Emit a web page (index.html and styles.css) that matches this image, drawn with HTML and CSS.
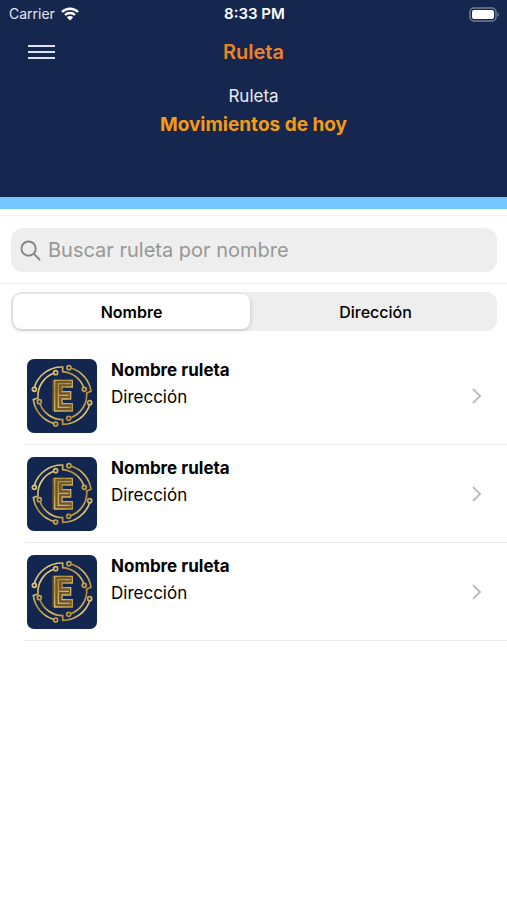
FILE: index.html
```html
<!DOCTYPE html>
<html lang="es">
<head>
<meta charset="utf-8">
<meta name="viewport" content="width=device-width, initial-scale=1">
<title>Ruleta</title>
<link rel="stylesheet" href="styles.css">
</head>
<body>
<svg class="defs" aria-hidden="true">
  <defs>
    <linearGradient id="gold" gradientUnits="userSpaceOnUse" x1="10" y1="30" x2="200" y2="190">
      <stop offset="0" stop-color="#9a7430"/>
      <stop offset=".2" stop-color="#e8cf7c"/>
      <stop offset=".4" stop-color="#b08a35"/>
      <stop offset=".55" stop-color="#d9b963"/>
      <stop offset=".75" stop-color="#b58d38"/>
      <stop offset=".88" stop-color="#efd984"/>
      <stop offset="1" stop-color="#a67d2c"/>
    </linearGradient>
    <symbol id="logo" viewBox="0 0 210 222">
      <g fill="none" stroke="url(#gold)" stroke-width="5">
        <path d="M22 85A86 86 0 0 1 107 24V38A73 73 0 0 1 170 85"/>
        <path d="M132 27A86 86 0 0 1 192 97L179 102A73 73 0 0 1 131 176"/>
        <path d="M188 137A86 86 0 0 1 107 196V182A73 73 0 0 1 39 134"/>
        <path d="M80 193A86 86 0 0 1 19 122L33 117A73 73 0 0 1 80 43"/>
        <circle cx="126" cy="26" r="6"/>
        <circle cx="86" cy="41" r="6"/>
        <circle cx="22" cy="91" r="6"/>
        <circle cx="37" cy="128" r="6"/>
        <circle cx="86" cy="195" r="6"/>
        <circle cx="125" cy="178" r="6"/>
        <circle cx="188" cy="131" r="6"/>
        <circle cx="172" cy="91" r="6"/>
      </g>
      <path d="M76 62H136V84H102V98H131V120H102V134H136V157H76Z" fill="#6d5630"/>
      <g fill="none" stroke="url(#gold)" stroke-width="4">
        <path d="M83 64H136V84H105V98H131V120H105V134H136V156H83Z"/>
        <path d="M130 74H94V109H125M94 109V145H130"/>
      </g>
    </symbol>
  </defs>
</svg>

<header class="header">
  <div class="status">
    <div class="carrier">Carrier
      <svg class="wifi" viewBox="0 0 18 14" aria-hidden="true">
        <path d="M1 5a11.500 11.500 0 0 1 16 0M4 8a7.200 7.200 0 0 1 10 0" fill="none" stroke="#fff" stroke-width="2.400"/>
        <path d="M5.800 10.300a4.600 4.600 0 0 1 6.400 0L9 13.600Z" fill="#fff"/>
      </svg>
    </div>
    <time>8:33 PM</time>
    <svg class="battery" viewBox="0 0 31 15" aria-hidden="true">
      <rect x="1" y="1" width="26" height="13" rx="4" fill="none" stroke="#737b97" stroke-width="1.500"/>
      <rect x="3" y="3" width="22" height="9" rx="2" fill="#fff"/>
      <path d="M28.500 5q3 2.500 0 5Z" fill="#737b97"/>
    </svg>
  </div>
  <nav class="navbar">
    <button class="menu" type="button" aria-label="Menú"><span></span><span></span><span></span></button>
    <h1>Ruleta</h1>
  </nav>
  <p class="subtitle">Ruleta</p>
  <h2>Movimientos de hoy</h2>
</header>

<main>
  <form class="search" role="search">
    <label class="field">
      <svg viewBox="0 0 22 22" aria-hidden="true"><circle cx="9" cy="9" r="7.500"/><path d="M14.500 14.500 21 21"/></svg>
      <input type="search" placeholder="Buscar ruleta por nombre" aria-label="Buscar ruleta por nombre">
    </label>
  </form>
  <div class="segments">
    <button class="segment selected" type="button" aria-pressed="true">Nombre</button>
    <button class="segment" type="button" aria-pressed="false">Dirección</button>
  </div>
  <ul class="list">
    <li><a class="row" href="#">
      <svg class="logo" aria-hidden="true"><use href="#logo"/></svg>
      <span class="text"><strong>Nombre ruleta</strong><span>Dirección</span></span>
      <svg class="chevron" viewBox="0 0 10 16" aria-hidden="true"><path d="m1 1 7 7-7 7"/></svg>
    </a></li>
    <li><a class="row" href="#">
      <svg class="logo" aria-hidden="true"><use href="#logo"/></svg>
      <span class="text"><strong>Nombre ruleta</strong><span>Dirección</span></span>
      <svg class="chevron" viewBox="0 0 10 16" aria-hidden="true"><path d="m1 1 7 7-7 7"/></svg>
    </a></li>
    <li><a class="row" href="#">
      <svg class="logo" aria-hidden="true"><use href="#logo"/></svg>
      <span class="text"><strong>Nombre ruleta</strong><span>Dirección</span></span>
      <svg class="chevron" viewBox="0 0 10 16" aria-hidden="true"><path d="m1 1 7 7-7 7"/></svg>
    </a></li>
  </ul>
</main>
</body>
</html>
```
FILE: styles.css
```css
* { box-sizing: border-box; }

body {
  margin: 0;
  background: #fff;
  color: #000;
  font-family: Inter, "Liberation Sans", sans-serif;
}

h1, h2, p, ul { margin: 0; padding: 0; }

button { border: 0; padding: 0; background: none; font: inherit; color: inherit; }

.defs { position: absolute; width: 0; height: 0; }

.header {
  padding-bottom: 60px;
  background: #16274f;
  border-bottom: 12px solid #74c6ff;
  color: #fff;
  text-align: center;
}

.status {
  display: grid;
  grid-template-columns: 1fr auto 1fr;
  align-items: center;
  height: 28px;
  padding: 0 7px 0 9px;
  font-size: 14px;
}

.status time { font-weight: 600; font-size: 15px; line-height: 20px; }

.carrier { display: flex; align-items: center; gap: 6px; color: #e3e6ee; line-height: 20px; }

.wifi { width: 18px; height: 14px; }

.battery { width: 31px; height: 15px; justify-self: end; }

.navbar {
  display: grid;
  grid-template-columns: 1fr auto 1fr;
  align-items: center;
  height: 48px;
  padding: 0 28px;
}

.menu { display: grid; gap: 4px; width: 27px; }

.menu span { height: 2px; background: #dfe3ee; }

h1 { color: #ee8322; font-size: 20px; font-weight: 600; line-height: 24px; }

.subtitle { padding-top: 8px; color: #e8ebf3; font-size: 17px; line-height: 24px; }

h2 { padding-top: 4px; color: #f59b13; font-size: 19px; font-weight: 700; line-height: 25px; }

.search {
  margin-top: 6px;
  padding: 12px 10px 11px 11px;
  border-top: 1px solid #f1f1f1;
  border-bottom: 1px solid #f1f1f1;
}

.field {
  display: flex;
  align-items: center;
  gap: 7px;
  height: 44px;
  padding: 0 9px;
  border-radius: 12px;
  background: #eee;
}

.field svg { flex: none; width: 21px; height: 21px; fill: none; stroke: #858585; stroke-width: 2; }

.field input {
  flex: 1;
  min-width: 0;
  padding: 0;
  border: 0;
  outline: 0;
  background: none;
  font: 20px Inter, "Liberation Sans", sans-serif;
}

.field input::placeholder { color: #979797; }

.segments {
  display: grid;
  grid-template-columns: 1fr 1fr;
  height: 39px;
  margin: 8px 10px 0 11px;
  border-radius: 11px;
  background: #eee;
}

.segment { font-size: 16px; font-weight: 500; }

.selected {
  margin: 2px 4px 2px 2px;
  border-radius: 8px;
  background: #fff;
  box-shadow: 0 1px 4px #0003;
  font-weight: 600;
}

.list { padding-top: 16px; list-style: none; }

.list li { margin-left: 25px; border-bottom: 1px solid #e9e9e9; }

.row {
  display: flex;
  align-items: center;
  height: 97px;
  padding: 0 25px 0 2px;
  color: inherit;
  text-decoration: none;
}

.logo { flex: none; width: 70px; height: 74px; border-radius: 7px; background: #132650; }

.text {
  display: flex;
  flex: 1;
  flex-direction: column;
  gap: 3px;
  align-self: flex-start;
  padding: 11px 14px 0;
  font-size: 17px;
  line-height: 24px;
}

.text strong { font-weight: 700; }

.chevron { width: 10px; height: 16px; fill: none; stroke: #bebebe; stroke-width: 2; }
```
